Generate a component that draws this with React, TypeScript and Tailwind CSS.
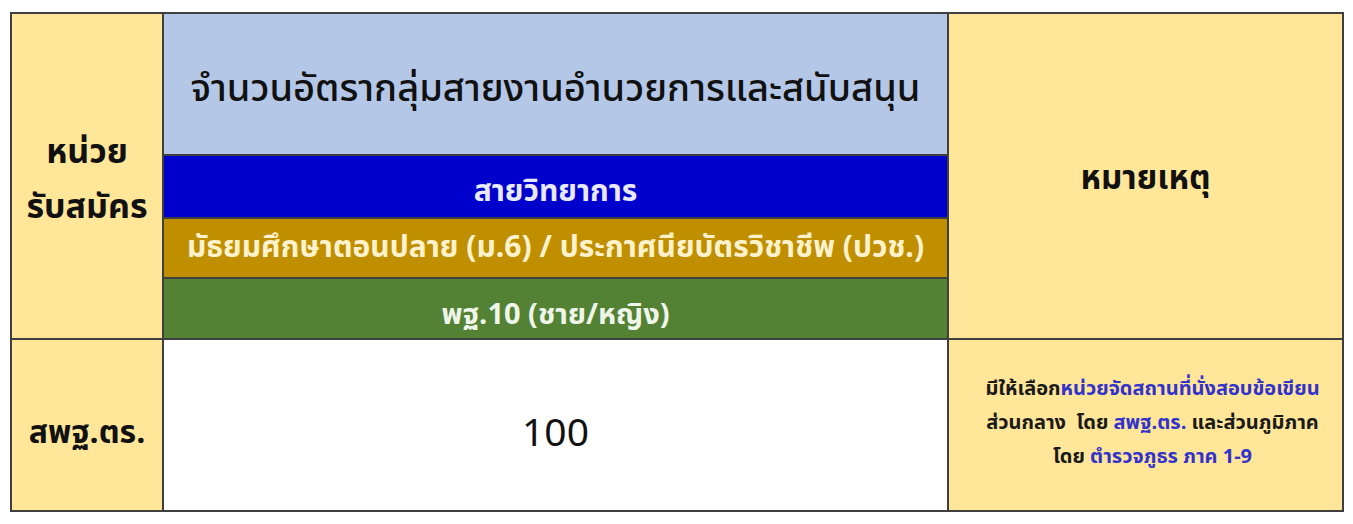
import React from "react";

const thai = { fontFamily: '"Noto Sans Thai", "Noto Sans", "DejaVu Sans", Tahoma, sans-serif' };

export default function App() {
  return (
    <div className="w-[1353px] h-[524px] bg-white pt-[12px] pl-[10px]" style={thai}>
      <div className="grid grid-cols-[150px_783px_393px] grid-rows-[140px_61px_58px_59px_170px] gap-[2px] p-[2px] bg-[#3f3f3f] w-[1334px]">
        <div className="row-span-4 bg-[#ffe699] flex flex-col items-center justify-center text-[34px] font-bold leading-[55px] text-[#111] pt-[8px]">
          <span>หน่วย</span>
          <span>รับสมัคร</span>
        </div>
        <div className="bg-[#b4c7e7] flex items-center justify-center text-[38px] font-medium text-[#111] pt-[10px]">
          จำนวนอัตรากลุ่มสายงานอำนวยการและสนับสนุน
        </div>
        <div className="row-span-4 bg-[#ffe699] flex items-center justify-center text-[33px] font-bold text-[#111] pt-[8px]">
          หมายเหตุ
        </div>
        <div className="bg-[#0000cc] flex items-center justify-center text-[30px] font-bold text-[#e8e8ff] pt-[12px]">
          สายวิทยาการ
        </div>
        <div className="bg-[#bf8f00] flex items-center justify-center text-[30px] font-bold text-[#fff2cc]">
          มัธยมศึกษาตอนปลาย (ม.6) / ประกาศนียบัตรวิชาชีพ (ปวช.)
        </div>
        <div className="bg-[#548235] flex items-center justify-center text-[29px] font-bold text-[#f0f5ea] pt-[14px]">
          พฐ.10 (ชาย/หญิง)
        </div>
        <div className="bg-[#ffe699] flex items-center justify-center text-[32px] font-bold text-[#111] pt-[16px]">
          สพฐ.ตร.
        </div>
        <div className="bg-white flex items-center justify-center text-[39px] text-[#111] pt-[20px]">
          100
        </div>
        <div className="bg-[#ffe699] flex flex-col items-center justify-center text-[20px] font-bold leading-[34px] text-[#1a1a1a] pb-[4px] pl-[14px]">
          <div>
            มีให้เลือก<span className="text-[#3333cc]">หน่วยจัดสถานที่นั่งสอบข้อเขียน</span>
          </div>
          <div className="whitespace-pre">
            {"ส่วนกลาง  โดย "}
            <span className="text-[#3333cc]">สพฐ.ตร.</span>
            {" และส่วนภูมิภาค"}
          </div>
          <div>
            โดย <span className="text-[#3333cc]">ตำรวจภูธร ภาค 1-9</span>
          </div>
        </div>
      </div>
    </div>
  );
}
